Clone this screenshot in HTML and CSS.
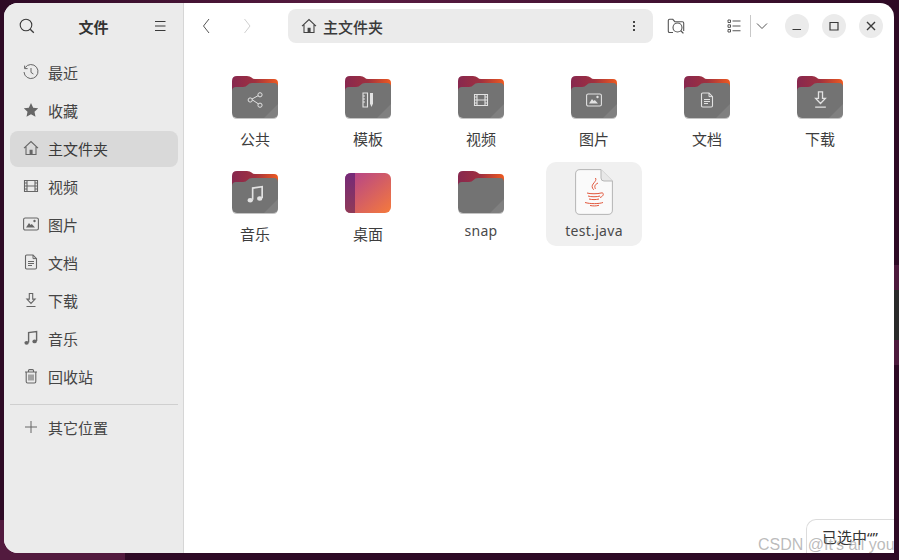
FILE: index.html
```html
<!DOCTYPE html>
<html lang="zh-CN">
  <head>
    <meta charset="UTF-8" />
    <title>文件</title>
    <link rel="stylesheet" href="styles.css">
  </head>
  <body>
    <svg class="defs" width="0" height="0">
      <defs>
        <linearGradient id="tabGrad" x1="0" y1="0" x2="1" y2="0">
          <stop offset="0" stop-color="#87284f" />
          <stop offset="0.5" stop-color="#a0303f" />
          <stop offset="1" stop-color="#ee5a20" />
        </linearGradient>
        <linearGradient id="deskGrad" x1="0" y1="0" x2="1" y2="1">
          <stop offset="0" stop-color="#b0408f" />
          <stop offset="1" stop-color="#f57a3c" />
        </linearGradient>
        <linearGradient id="deskBand" x1="0" y1="0" x2="0" y2="1">
          <stop offset="0" stop-color="#752a78" />
          <stop offset="1" stop-color="#8f3a58" />
        </linearGradient>
        <symbol id="folder" viewBox="0 0 46 43">
          <path d="M0 5q0-5 5-5h10q3 0 4.500 1.500T23 3h19q4 0 4 4v20H0z" fill="url(#tabGrad)" />
          <path d="M0 15q0-4 4-4h7q3 0 4.500-2T20 7h22q4 0 4 4v26q0 5-5 5H5q-5 0-5-5z" fill="#737373" />
          <path d="M46 28v9q0 5-5 5h-9z" fill="#808080" />
          <path d="M0 37q0 5 5 5h36q5 0 5-5v1q0 5-5 5H5q-5 0-5-5z" fill="#c4c4c4" />
        </symbol>
        <symbol id="i-home" viewBox="0 0 16 16">
          <path d="M1 8.200 8 1.600l7 6.600M3 6.800v7.700h10V6.800" fill="none" stroke="currentColor" stroke-width="1.100" />
          <path d="M6.600 14.500V9.800h3v4.700z" fill="currentColor" />
        </symbol>
        <symbol id="i-film" viewBox="0 0 16 16">
          <path d="M1.500 2.500h13v11h-13zM4 2.500v11M12 2.500v11M4 8h8M1.500 5h2.500M1.500 8h2.500M1.500 11h2.500M12 5h2.500M12 8h2.500M12 11h2.500" fill="none" stroke="currentColor" stroke-width="1.100" />
        </symbol>
        <symbol id="i-pic" viewBox="0 0 16 16">
          <rect x="0.600" y="2" width="14.800" height="12" rx="1.600" fill="none" stroke="currentColor" stroke-width="1.100" />
          <path d="M3 11.500 6 7l1.600 2 1.200-1 3.200 3.500z" fill="currentColor" />
          <circle cx="11.500" cy="5" r="1.200" fill="currentColor" />
        </symbol>
        <symbol id="i-doc" viewBox="0 0 16 16">
          <path d="M2.500 2.200q0-1.200 1.200-1.200H10l3.500 3.600v9.200q0 1.200-1.200 1.200H3.700q-1.200 0-1.200-1.200z" fill="none" stroke="currentColor" stroke-width="1.100" />
          <path d="M10 1v3.600h3.500M5 7.500h6M5 9.500h6M5 11.500h4" fill="none" stroke="currentColor" stroke-width="1" />
        </symbol>
        <symbol id="i-down" viewBox="0 0 16 16">
          <path d="M6.300 1.500h3.400v5.600h2.400L8 11.400 3.900 7.100h2.400zM3.500 14.500h9" fill="none" stroke="currentColor" stroke-width="1.100" />
        </symbol>
        <symbol id="i-music" viewBox="0 0 16 16">
          <path d="M5.600 12.500V2.600l8-1.100v9.500" fill="none" stroke="currentColor" stroke-width="1.400" />
          <ellipse cx="3.600" cy="12.800" rx="2.200" ry="1.900" fill="currentColor" />
          <ellipse cx="11.600" cy="11.400" rx="2.200" ry="1.900" fill="currentColor" />
        </symbol>
        <symbol id="i-share" viewBox="0 0 16 16">
          <path d="M12 3.200 4.500 7.300l7.500 5" fill="none" stroke="currentColor" stroke-width="1" />
          <circle cx="3.200" cy="8" r="2.100" fill="#737373" stroke="currentColor" />
          <circle cx="13" cy="2.800" r="2.100" fill="#737373" stroke="currentColor" />
          <circle cx="13" cy="13.200" r="2.100" fill="#737373" stroke="currentColor" />
        </symbol>
        <symbol id="i-template" viewBox="0 0 16 16">
          <path d="M3 1h4.500v14H3zM3 4h2M3 7h2M3 10h2" fill="none" stroke="currentColor" stroke-width="1.100" />
          <path d="M10 1h3v10.500L11.500 15 10 11.500z" fill="currentColor" />
        </symbol>
      </defs>
    </svg>

    <div class="window">
      <aside class="sidebar">
        <header class="side-head">
          <svg class="icon" viewBox="0 0 16 16"><circle cx="7" cy="7" r="5.800" fill="none" stroke="currentColor" stroke-width="1.100" /><path d="m11.200 11.200 3.600 3.600" stroke="currentColor" stroke-width="1.300" /></svg>
          <span class="side-title">文件</span>
          <svg class="icon" viewBox="0 0 16 16"><path d="M3 3.500h10.500M3 8h10.500M3 12.500h10.500" stroke="currentColor" stroke-width="1.100" /></svg>
        </header>
        <nav class="places">
          <a class="place">
            <svg class="icon" viewBox="0 0 16 16"><path d="M2.200 3.600A7 7 0 1 1 1 8M1.600 1.600v3h3" fill="none" stroke="currentColor" stroke-width="1" /><path d="M8 4v4.400l2.400 1.600" fill="none" stroke="currentColor" stroke-width="1" /></svg>最近
          </a>
          <a class="place">
            <svg class="icon" viewBox="0 0 16 16"><path d="m8 1 2.200 4.700 5 .6-3.700 3.400 1 5L8 12.200l-4.500 2.500 1-5L.8 6.300l5-.6z" fill="currentColor" /></svg>收藏
          </a>
          <a class="place active"><svg class="icon"><use href="#i-home" /></svg>主文件夹</a>
          <a class="place"><svg class="icon"><use href="#i-film" /></svg>视频</a>
          <a class="place"><svg class="icon"><use href="#i-pic" /></svg>图片</a>
          <a class="place"><svg class="icon"><use href="#i-doc" /></svg>文档</a>
          <a class="place"><svg class="icon"><use href="#i-down" /></svg>下载</a>
          <a class="place"><svg class="icon"><use href="#i-music" /></svg>音乐</a>
          <a class="place">
            <svg class="icon" viewBox="0 0 16 16"><path d="M2 4h12M5.500 4V2.600q0-1 1-1h3q1 0 1 1V4M3.200 4v9.600q0 1.400 1.400 1.400h6.800q1.400 0 1.400-1.400V4M6 6.500v6M8 6.500v6M10 6.500v6" fill="none" stroke="currentColor" stroke-width="1.100" /></svg>回收站
          </a>
          <hr class="side-sep" />
          <a class="place">
            <svg class="icon" viewBox="0 0 16 16"><path d="M8 2v12M2 8h12" stroke="currentColor" stroke-width="1" /></svg>其它位置
          </a>
        </nav>
      </aside>

      <main class="content">
        <header class="toolbar">
          <button class="tool">
            <svg class="icon" viewBox="0 0 16 16"><path d="M10 1 4.500 8l5.500 7" fill="none" stroke="currentColor" stroke-width="1" /></svg>
          </button>
          <button class="tool dim">
            <svg class="icon" viewBox="0 0 16 16"><path d="m5.500 1 5.500 7-5.500 7" fill="none" stroke="currentColor" stroke-width="1" /></svg>
          </button>
          <div class="pathbar">
            <svg class="icon"><use href="#i-home" /></svg>
            <span class="path-name">主文件夹</span>
            <svg class="icon path-more" viewBox="0 0 16 16"><path d="M8 3v2M8 7v2M8 11v2" stroke="currentColor" stroke-width="2" /></svg>
          </div>
          <button class="tool search-tool">
            <svg class="icon wide" viewBox="0 0 18 16"><path d="M6 14.500H2.600q-1.300 0-1.300-1.300V2.600q0-1.300 1.300-1.300h3.200l2 2.400h7.600q1.300 0 1.300 1.300v8" fill="none" stroke="currentColor" stroke-width="1.100" /><circle cx="10.500" cy="9.500" r="4.500" fill="#fff" stroke="currentColor" stroke-width="1.100" /><path d="m13.800 12.800 2.600 2.600" stroke="currentColor" stroke-width="1.300" /></svg>
          </button>
          <div class="view-switch">
            <svg class="icon" viewBox="0 0 16 16"><path d="M2 2h2.500v2.500H2zM2 6.800h2.500v2.500H2zM2 11.500h2.500V14H2z" fill="none" stroke="currentColor" stroke-width="1" /><path d="M6.500 3h8M6.500 8h8M6.500 12.800h8" stroke="currentColor" stroke-width="1.100" /></svg>
            <span class="view-sep"></span>
            <svg class="icon view-more" viewBox="0 0 16 16"><path d="m3 5.500 5 5 5-5" fill="none" stroke="currentColor" stroke-width="1" /></svg>
          </div>
          <div class="win-btns">
            <button class="win-btn"><svg viewBox="0 0 16 16"><path d="M3.500 11.500h8.500" stroke="currentColor" stroke-width="1.200" /></svg></button>
            <button class="win-btn"><svg viewBox="0 0 16 16"><path d="M4 4.500h8v7.500H4z" fill="none" stroke="currentColor" stroke-width="1.200" /></svg></button>
            <button class="win-btn"><svg viewBox="0 0 16 16"><path d="m4 4 8 8M12 4l-8 8" stroke="currentColor" stroke-width="1.400" /></svg></button>
          </div>
        </header>

        <section class="grid">
          <div class="item"><div class="thumb"><svg class="folder"><use href="#folder" /></svg><svg class="emblem"><use href="#i-share" /></svg></div><span class="name">公共</span></div>
          <div class="item"><div class="thumb"><svg class="folder"><use href="#folder" /></svg><svg class="emblem"><use href="#i-template" /></svg></div><span class="name">模板</span></div>
          <div class="item"><div class="thumb"><svg class="folder"><use href="#folder" /></svg><svg class="emblem"><use href="#i-film" /></svg></div><span class="name">视频</span></div>
          <div class="item"><div class="thumb"><svg class="folder"><use href="#folder" /></svg><svg class="emblem"><use href="#i-pic" /></svg></div><span class="name">图片</span></div>
          <div class="item"><div class="thumb"><svg class="folder"><use href="#folder" /></svg><svg class="emblem"><use href="#i-doc" /></svg></div><span class="name">文档</span></div>
          <div class="item"><div class="thumb"><svg class="folder"><use href="#folder" /></svg><svg class="emblem large"><use href="#i-down" /></svg></div><span class="name">下载</span></div>
          <div class="item"><div class="thumb"><svg class="folder"><use href="#folder" /></svg><svg class="emblem large"><use href="#i-music" /></svg></div><span class="name">音乐</span></div>
          <div class="item">
            <div class="thumb">
              <svg class="folder" viewBox="0 0 46 43">
                <rect y="2" width="46" height="40" rx="6" fill="url(#deskGrad)" />
                <path d="M10 2H6q-6 0-6 6v28q0 6 6 6h4z" fill="url(#deskBand)" />
              </svg>
            </div>
            <span class="name">桌面</span>
          </div>
          <div class="item"><div class="thumb"><svg class="folder"><use href="#folder" /></svg></div><span class="name latin">snap</span></div>
          <div class="item selected">
            <div class="thumb">
              <svg class="page" viewBox="0 0 38 46">
                <path d="M.6 5Q.6.600 5 .600H26L37.400 12V41q0 4.400-4.400 4.400H5Q.6 45.400.6 41z" fill="#fafafa" stroke="#b5b5b5" />
                <path d="M26 .600V9q0 3 3 3h8.400" fill="#e8e8e8" stroke="#b5b5b5" />
                <path d="M20.500 9c2 3.500-5 6-3 10 .6 1.300 1.500 2 1.500 2M23 14c-4 2-3.500 4-2.500 6" fill="none" stroke="#e2573c" stroke-width="1" />
                <path d="M12 24c3 1 11 1 14 0M13 27c3 1 9 1 12 0M14 30c3 .8 7 .8 10 0M26 24c3-1 3.500 3-1 4.500M10 33.500c5 1.500 14 1.500 18 0M15 36.500c3 .6 6 .6 9-.2" fill="none" stroke="#e2573c" stroke-width="1" />
              </svg>
            </div>
            <span class="name latin">test.java</span>
          </div>
        </section>
      </main>

      <div class="status">已选中“”</div>
    </div>
    <div class="watermark">CSDN @It's all you</div>
  </body>
</html>
```

FILE: styles.css
```css
* {
  box-sizing: border-box;
}
html,
body {
  height: 100%;
}
body {
  margin: 0;
  padding: 3px 5px 7px 4px;
  overflow: hidden;
  font-family: "Noto Sans CJK SC", "Noto Sans", sans-serif;
  font-size: 15px;
  color: #3d3d3d;
  background-color: #2e0a25;
  background-image:
    linear-gradient(#2a2a2a, #2a2a2a),
    linear-gradient(#4d1a3c, #4d1a3c),
    linear-gradient(90deg, #2e0a25, #5a1c42 40%, #2e0a25),
    linear-gradient(#521a3e, #521a3e);
  background-repeat: no-repeat;
  background-size: 5px 50px, 5px 100px, 100% 3px, 125px 40px;
  background-position: right 0 top 290px, right 0 top 265px, top left, bottom left;
}
.defs {
  position: absolute;
}
.icon {
  width: 16px;
  height: 16px;
  flex: none;
  display: block;
}
.icon.wide {
  width: 18px;
}

.window {
  position: relative;
  display: flex;
  height: 100%;
  border-radius: 14px 14px 0 14px;
  overflow: hidden;
  background: #fff;
}

/* sidebar */
.sidebar {
  width: 180px;
  flex: none;
  background: #ebebeb;
  border-right: 1px solid #d6d6d6;
}
.side-head {
  height: 52px;
  padding: 0 15px 6px;
  display: flex;
  align-items: center;
  justify-content: space-between;
  color: #3a3a3a;
}
.side-title {
  font-weight: 700;
  font-size: 15px;
  color: #333;
}
.places {
  padding: 0 5px 0 6px;
  display: flex;
  flex-direction: column;
  gap: 2px;
}
.place {
  height: 36px;
  padding: 0 13px 2px;
  display: flex;
  align-items: center;
  gap: 9px;
  border-radius: 8px;
  color: #444;
}
.place .icon {
  color: #666;
}
.place.active {
  background: #d9d9d9;
  color: #3a3a3a;
}
.side-sep {
  width: 100%;
  margin: 7px 0 3px;
  border: none;
  border-top: 1px solid #cfcfcf;
}

/* toolbar */
.content {
  flex: 1;
  min-width: 0;
}
.toolbar {
  height: 46px;
  display: flex;
  align-items: center;
  padding: 0 0 0 3px;
}
.tool {
  width: 40px;
  height: 34px;
  padding: 0;
  border: none;
  background: none;
  color: #555;
  display: flex;
  align-items: center;
  justify-content: center;
}
.tool.dim {
  color: #cfcfcf;
}
.pathbar {
  width: 365px;
  height: 34px;
  margin-left: 21px;
  padding: 0 11px 0 13px;
  display: flex;
  align-items: center;
  gap: 6px;
  border-radius: 8px;
  background: #ebebeb;
  color: #444;
}
.path-name {
  font-weight: 500;
  color: #3a3a3a;
}
.path-more {
  margin-left: auto;
}
.search-tool {
  margin-left: 3px;
}
.view-switch {
  margin-left: 30px;
  display: flex;
  align-items: center;
  gap: 8px;
  color: #555;
}
.view-more {
  margin-left: -5px;
}
.view-sep {
  width: 1px;
  height: 22px;
  background: #c8c8c8;
}
.win-btns {
  margin-left: 15px;
  display: flex;
  gap: 13px;
}
.win-btn {
  width: 24px;
  height: 24px;
  padding: 4px;
  border: none;
  border-radius: 50%;
  background: #ebebeb;
  color: #3a3a3a;
}
.win-btn svg {
  display: block;
}

/* file grid */
.grid {
  padding: 18px 0 0 23px;
  display: grid;
  grid-template-columns: repeat(6, 96px);
  grid-auto-rows: 84px;
  column-gap: 17px;
  row-gap: 11px;
}
.item {
  display: flex;
  flex-direction: column;
  align-items: center;
  border-radius: 10px;
}
.item.selected {
  background: #f0f0f0;
}
.thumb {
  position: relative;
  height: 60px;
  padding-top: 9px;
}
.folder {
  display: block;
  width: 46px;
  height: 43px;
}
.emblem {
  position: absolute;
  left: 15px;
  top: 25px;
  width: 16px;
  height: 16px;
  color: #e2e2e2;
}
.emblem.large {
  left: 14px;
  top: 23px;
  width: 19px;
  height: 19px;
}
.page {
  display: block;
  width: 38px;
  height: 46px;
  margin-top: -2px;
}
.name {
  line-height: 24px;
  color: #3d3d3d;
}
.name.latin {
  font-family: "Noto Sans", sans-serif;
  font-size: 14px;
  line-height: 20px;
  letter-spacing: 0.3px;
  margin-top: -1px;
  color: #4a4a4a;
}

/* overlays */
.status {
  position: absolute;
  right: 0;
  bottom: 0;
  width: 88px;
  height: 34px;
  padding: 7px 0 0 15px;
  background: #fff;
  border: 1px solid #dcdcdc;
  border-right: none;
  border-bottom: none;
  border-top-left-radius: 10px;
  font-family: "Noto Sans", "Noto Sans CJK SC", sans-serif;
  line-height: 20px;
  color: #333;
}
.watermark {
  position: absolute;
  left: 758px;
  top: 535px;
  width: 141px;
  overflow: hidden;
  white-space: nowrap;
  font-family: "Liberation Sans", sans-serif;
  font-size: 16px;
  line-height: 20px;
  color: rgba(130, 130, 130, 0.55);
}
```
